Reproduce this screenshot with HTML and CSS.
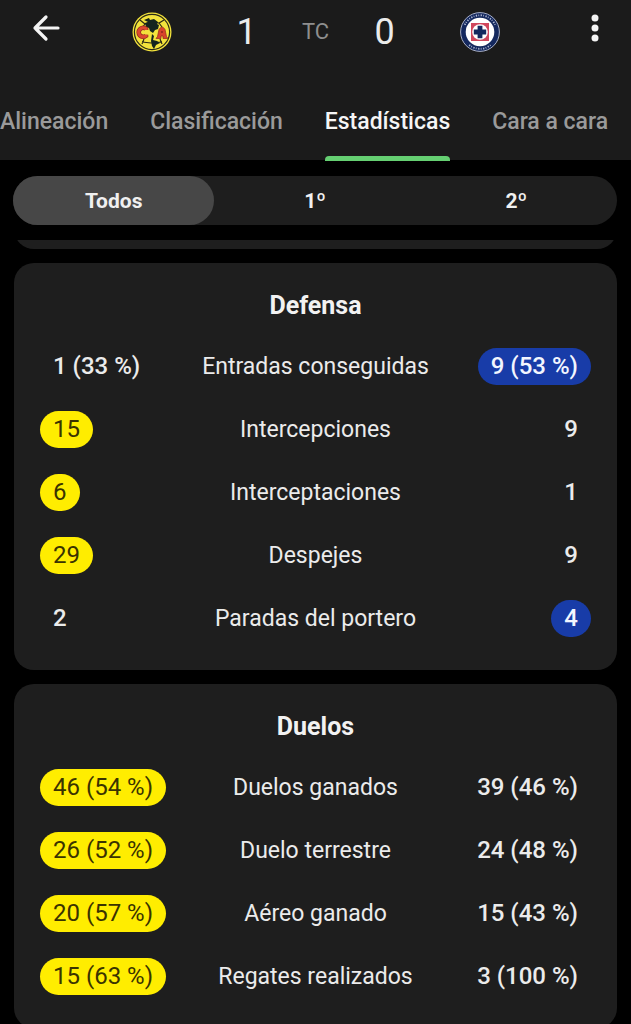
FILE: index.html
```html
<!DOCTYPE html>
<html lang="es">
<head>
<meta charset="utf-8">
<meta name="viewport" content="width=device-width, initial-scale=1">
<title>Estadísticas</title>
<link rel="stylesheet" href="styles.css">
</head>
<body>
<div class="app">
  <header class="header">
    <div class="bar">
      <button class="icon-button" type="button" aria-label="Volver">
        <svg class="icon" viewBox="0 0 32 32" aria-hidden="true">
          <path d="M28 16H5M16 5L5 16l11 11" fill="none" stroke="#f4f4f4" stroke-width="3.2" stroke-linecap="round" stroke-linejoin="round"/>
        </svg>
      </button>
      <div class="match">
        <svg class="crest" viewBox="0 0 40 40" role="img" aria-label="América">
          <circle cx="20" cy="20" r="19.5" fill="#f3e33c"/>
          <circle cx="20" cy="20" r="17.6" fill="none" stroke="#2b2a16" stroke-width="1.2"/>
          <path d="M8 8l5 4 5-2M13 12l-3 4M32 8l-5 3-5-1M27 11l3 4M12 27l-2 5M28 27l2 5M10 30l9 1 11-1" fill="none" stroke="#2b2a16" stroke-width="1.2"/>
          <path d="M12 8l5-2 1 2 4-1 4 3-1 2 2 1-1 4-3 1-2 3-3-2-1-3-3-1-1-4 3-1z" fill="#14251f"/>
          <path d="M20 22l2 2-1 4 4 1 3 2-4 2-2 4-2-3-1-5z" fill="#14251f"/>
          <path d="M14 18v-1.200a4.500 4.500 0 1 0 0 7v-1" fill="none" stroke="#922a1c" stroke-width="4.600"/>
          <path d="M14 18v-1.200a4.500 4.500 0 1 0 0 7v-1" fill="none" stroke="#dc4930" stroke-width="3.200"/>
          <path d="M24 26.500l1.500-2 1.500-7q3-5 6 0l1.500 7 1.500 2h-5v-2.500h-2v2.500z" fill="#d8432c" stroke="#922a1c" stroke-width=".7"/>
          <path d="M29.200 20h1.600" stroke="#922a1c" stroke-width="2"/>
        </svg>
        <span class="score">1</span>
        <span class="status">TC</span>
        <span class="score">0</span>
        <svg class="crest" viewBox="0 0 40 40" role="img" aria-label="Cruz Azul">
          <circle cx="20" cy="20" r="19.4" fill="#14285e" stroke="#a9b0c6" stroke-width="1"/>
          <path d="M4.800 12.900A16.800 16.800 0 0 1 35.200 12.900M9.200 32.900A16.800 16.800 0 0 0 30.800 32.900" fill="none" stroke="#aeb7d2" stroke-width="1.800" stroke-dasharray="1.300 1.300 .8 1.500"/>
          <circle cx="20" cy="20" r="14.3" fill="#fff"/>
          <path d="M11 11h18v18H11z" fill="#d0475d"/>
          <circle cx="20" cy="20" r="7.8" fill="#fff"/>
          <path d="M17.6 13.8h4.8v3.8h3.8v4.8h-3.8v3.8h-4.8v-3.8h-3.8v-4.8h3.8z" fill="#14285e"/>
        </svg>
      </div>
      <button class="icon-button" type="button" aria-label="Más opciones">
        <svg class="icon" viewBox="0 0 32 32" aria-hidden="true">
          <g fill="#f4f4f4"><circle cx="16" cy="6" r="3.5"/><circle cx="16" cy="16" r="3.5"/><circle cx="16" cy="26" r="3.5"/></g>
        </svg>
      </button>
    </div>
    <nav class="tabs">
      <a class="tab" href="#alineacion">Alineación</a>
      <a class="tab" href="#clasificacion">Clasificación</a>
      <a class="tab tab-active" href="#estadisticas" aria-current="page">Estadísticas</a>
      <a class="tab" href="#cara">Cara a cara</a>
    </nav>
  </header>

  <div class="periods">
    <button class="period period-active" type="button" aria-pressed="true">Todos</button>
    <button class="period" type="button" aria-pressed="false">1º</button>
    <button class="period" type="button" aria-pressed="false">2º</button>
  </div>

  <main class="content" id="estadisticas">
    <div class="card-tail"><div class="card-end"></div></div>
    <section class="card">
      <h2 class="card-title" id="defensa">Defensa</h2>
      <table class="stats" aria-labelledby="defensa">
        <tbody>
          <tr><td class="home"><span class="value">1 (33 %)</span></td><th scope="row">Entradas conseguidas</th><td class="away"><span class="value value-away">9 (53 %)</span></td></tr>
          <tr><td class="home"><span class="value value-home">15</span></td><th scope="row">Intercepciones</th><td class="away"><span class="value">9</span></td></tr>
          <tr><td class="home"><span class="value value-home">6</span></td><th scope="row">Interceptaciones</th><td class="away"><span class="value">1</span></td></tr>
          <tr><td class="home"><span class="value value-home">29</span></td><th scope="row">Despejes</th><td class="away"><span class="value">9</span></td></tr>
          <tr><td class="home"><span class="value">2</span></td><th scope="row">Paradas del portero</th><td class="away"><span class="value value-away">4</span></td></tr>
        </tbody>
      </table>
    </section>
    <section class="card">
      <h2 class="card-title" id="duelos">Duelos</h2>
      <table class="stats" aria-labelledby="duelos">
        <tbody>
          <tr><td class="home"><span class="value value-home">46 (54 %)</span></td><th scope="row">Duelos ganados</th><td class="away"><span class="value">39 (46 %)</span></td></tr>
          <tr><td class="home"><span class="value value-home">26 (52 %)</span></td><th scope="row">Duelo terrestre</th><td class="away"><span class="value">24 (48 %)</span></td></tr>
          <tr><td class="home"><span class="value value-home">20 (57 %)</span></td><th scope="row">Aéreo ganado</th><td class="away"><span class="value">15 (43 %)</span></td></tr>
          <tr><td class="home"><span class="value value-home">15 (63 %)</span></td><th scope="row">Regates realizados</th><td class="away"><span class="value">3 (100 %)</span></td></tr>
        </tbody>
      </table>
    </section>
  </main>
</div>
</body>
</html>
```

FILE: styles.css
```css
* {
  box-sizing: border-box;
}

body {
  margin: 0;
  background: #000;
  color: #ebebeb;
  font-family: Roboto, "Noto Sans", sans-serif;
}

button {
  border: 0;
  background: none;
  color: inherit;
  font-family: inherit;
  cursor: pointer;
}

.app {
  display: flex;
  flex-direction: column;
  height: 100vh;
  overflow: hidden;
}

.header {
  display: flex;
  flex-direction: column;
  flex: none;
  background: #1b1b1b;
}

.bar {
  display: flex;
  justify-content: space-between;
  align-items: flex-start;
  padding: 12px 20px 8px 30px;
}

.icon-button {
  padding: 0;
}

.icon {
  display: block;
  width: 32px;
  height: 32px;
}

.match {
  display: flex;
  align-items: center;
  gap: 42px;
  padding-right: 10px;
}

.crest {
  width: 40px;
  height: 40px;
}

.crest:first-child {
  margin-right: 21px;
}

.crest:last-child {
  margin-left: 21px;
}

.score {
  width: 24px;
  font-size: 36px;
  line-height: 40px;
  text-align: center;
}

.status {
  width: 30px;
  color: #8e8e8e;
  font-size: 22px;
  line-height: 40px;
  text-align: center;
}

.tabs {
  display: flex;
  gap: 42px;
  height: 100px;
}

.tab {
  display: flex;
  flex: none;
  flex-direction: column;
  justify-content: space-between;
  height: 101px;
  padding-top: 48px;
  color: #9a9a9a;
  font-size: 23px;
  font-weight: 500;
  line-height: 28px;
  text-decoration: none;
  white-space: nowrap;
}

.tab-active {
  color: #f5f5f5;
}

.tab-active::after {
  height: 5px;
  border-radius: 4px 4px 0 0;
  background: #65cf72;
  content: "";
}

.periods {
  display: grid;
  flex: none;
  grid-template-columns: repeat(3, 1fr);
  height: 49px;
  margin: 16px 14px 15px 13px;
  border-radius: 25px;
  background: #1e1e1e;
}

.period {
  border-radius: 25px;
  color: #f0f0f0;
  font-size: 21px;
  font-weight: 700;
}

.period-active {
  background: #474747;
}

.content {
  flex: 1;
  min-height: 0;
  padding: 0 14px;
  overflow: hidden;
}

.card-tail {
  display: flex;
  align-items: flex-end;
  height: 9px;
  overflow: hidden;
}

.card-end {
  flex: 1;
  height: 40px;
  border-radius: 20px;
  background: #1e1e1e;
}

.card {
  margin-top: 14px;
  padding: 27px 26px 20px;
  border-radius: 20px;
  background: #1e1e1e;
}

.card-title {
  margin: 0 0 13px;
  color: #f2f2f2;
  font-size: 25px;
  font-weight: 700;
  line-height: 32px;
  text-align: center;
}

.stats {
  width: 100%;
  border-collapse: collapse;
  table-layout: fixed;
  font-size: 24px;
  line-height: 37px;
  white-space: nowrap;
}

.stats tr {
  height: 63px;
}

.stats td,
.stats th {
  padding: 0;
}

.stats th {
  width: 42%;
  font-size: 23px;
  font-weight: 400;
}

.stats .home {
  text-align: left;
}

.stats .away {
  text-align: right;
}

.value {
  display: inline-block;
  padding: 0 13px;
  border-radius: 19px;
  font-weight: 500;
}

.value-home {
  background: #ffed00;
  color: #3a3300;
  font-weight: 400;
}

.value-away {
  background: #183ca8;
  color: #f2f6ff;
}
```
